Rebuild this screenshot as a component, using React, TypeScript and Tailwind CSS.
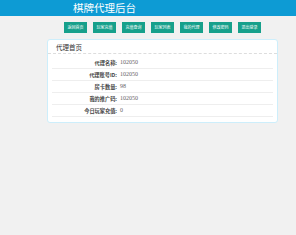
const navItems = ['返回首页', '玩家充值', '充值查询', '玩家列表', '我的代理', '修改密码', '退出登录'];

const rows = [
  { label: '代理名称:', value: '102050' },
  { label: '代理账号ID:', value: '102050' },
  { label: '房卡数量:', value: '98' },
  { label: '我的推广码:', value: '102050' },
  { label: '今日玩家充值:', value: '0' },
];

export default function App() {
  return (
    <div className="min-h-screen bg-[#f1f1f1] font-['Noto_Sans_CJK_SC',sans-serif]">
      <header className="h-[16px] bg-[#0d9bd4]">
        <h1 className="pl-[73px] text-[10.5px] leading-[16px] text-white">棋牌代理后台</h1>
      </header>

      <nav className="flex gap-[6px] pl-[64px] pt-[6px]">
        {navItems.map((item) => (
          <button
            key={item}
            className="h-[11px] w-[23px] bg-[#16a08b] text-[4px] leading-[11px] text-white"
          >
            {item}
          </button>
        ))}
      </nav>

      <div className="ml-[47px] mt-[6px] w-[231px] rounded-[3px] border border-[#cdeefb] bg-white">
        <div className="h-[14px] border-b border-dashed border-[#ddd] pl-[8px] text-[6.5px] leading-[14px] text-[#333]">
          代理首页
        </div>
        <div className="px-[4px] pb-[5px] pt-[3px]">
          {rows.map((row) => (
            <div key={row.label} className="flex h-[12px] items-center border-b border-[#eee]">
              <span className="w-[65px] text-right text-[5.2px] font-bold text-[#444]">{row.label}</span>
              <span className="ml-[3px] font-['Liberation_Serif',serif] text-[6px] text-[#666]">{row.value}</span>
            </div>
          ))}
        </div>
      </div>
    </div>
  );
}
